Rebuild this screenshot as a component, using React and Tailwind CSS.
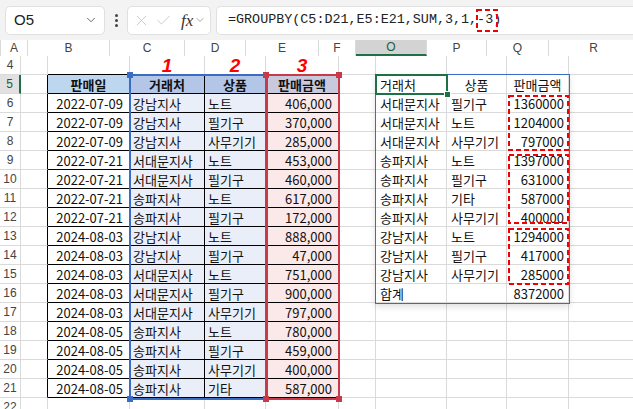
import React from "react";
import { X, Check, ChevronDown } from "lucide-react";

const COLS = [
  { k: "A", w: "w-[27px]" },
  { k: "B", w: "w-[82px]" },
  { k: "C", w: "w-[75px]" },
  { k: "D", w: "w-[61px]" },
  { k: "E", w: "w-[73px]" },
  { k: "F", w: "w-[37px]" },
  { k: "O", w: "w-[71px]" },
  { k: "P", w: "w-[60px]" },
  { k: "Q", w: "w-[62px]" },
  { k: "R", w: "w-[90px]" },
];

const SALES = [
  ["2022-07-09", "강남지사", "노트", "406,000"],
  ["2022-07-09", "강남지사", "필기구", "370,000"],
  ["2022-07-09", "강남지사", "사무기기", "285,000"],
  ["2022-07-21", "서대문지사", "노트", "453,000"],
  ["2022-07-21", "서대문지사", "필기구", "460,000"],
  ["2022-07-21", "송파지사", "노트", "617,000"],
  ["2022-07-21", "송파지사", "필기구", "172,000"],
  ["2024-08-03", "강남지사", "노트", "888,000"],
  ["2024-08-03", "강남지사", "필기구", "47,000"],
  ["2024-08-03", "서대문지사", "노트", "751,000"],
  ["2024-08-03", "서대문지사", "필기구", "900,000"],
  ["2024-08-03", "서대문지사", "사무기기", "797,000"],
  ["2024-08-05", "송파지사", "노트", "780,000"],
  ["2024-08-05", "송파지사", "필기구", "459,000"],
  ["2024-08-05", "송파지사", "사무기기", "400,000"],
  ["2024-08-05", "송파지사", "기타", "587,000"],
];

const RESULT = [
  ["서대문지사", "필기구", "1360000"],
  ["서대문지사", "노트", "1204000"],
  ["서대문지사", "사무기기", "797000"],
  ["송파지사", "노트", "1397000"],
  ["송파지사", "필기구", "631000"],
  ["송파지사", "기타", "587000"],
  ["송파지사", "사무기기", "400000"],
  ["강남지사", "노트", "1294000"],
  ["강남지사", "필기구", "417000"],
  ["강남지사", "사무기기", "285000"],
  ["합계", "", "8372000"],
];

const ROWS = [4, 5, 6, 7, 8, 9, 10, 11, 12, 13, 14, 15, 16, 17, 18, 19, 20, 21, 22];
const LEFT = ["B", "C", "D", "E"];
const MARKS = { C: "1", D: "2", E: "3" };

function cellInfo(r, k) {
  let text = "";
  let cls = "bg-white";
  const inLeft = LEFT.includes(k) && r >= 5 && r <= 21;
  if (r === 4 && MARKS[k]) {
    return { text: MARKS[k], cls: "justify-center text-[#ff0000] font-bold italic text-[19px] font-['Liberation_Sans',sans-serif]" };
  }
  if (inLeft) {
    const i = LEFT.indexOf(k);
    if (r === 5) {
      text = ["판매일", "거래처", "상품", "판매금액"][i];
      const bg = ["bg-[#bdd7ee]", "bg-[#b4c6e7]", "bg-[#b4c6e7]", "bg-[#c9c9dd]"][i];
      cls = `${bg} justify-center font-bold`;
    } else {
      text = SALES[r - 6][i];
      if (k === "B") cls = "bg-white justify-end pr-[6px]";
      if (k === "C" || k === "D") cls = "bg-[#e9eef8] pl-[3px]";
      if (k === "E") cls = "bg-[#fbe9ea] justify-end pr-[6px]";
    }
  }
  const ri = ["O", "P", "Q"].indexOf(k);
  if (ri >= 0 && r >= 5 && r <= 16) {
    if (r === 5) {
      text = ["거래처", "상품", "판매금액"][ri];
      cls = ri === 0 ? "bg-white pl-[4px]" : "bg-white justify-center";
    } else {
      text = RESULT[r - 6][ri];
      cls = ri === 2 ? "bg-white justify-end pr-[4px]" : "bg-white pl-[4px]";
    }
  }
  return { text, cls };
}

function borderCls(r, k) {
  const rBlack = (LEFT.includes(k) || k === "A") && r >= 5 && r <= 21;
  const bBlack = LEFT.includes(k) && r >= 4 && r <= 21;
  return `border-r border-b ${rBlack ? "border-r-black" : "border-r-[#dadada]"} ${bBlack ? "border-b-black" : "border-b-[#dadada]"}`;
}

function DashBox({ cls }) {
  return (
    <svg className={`absolute ${cls}`} preserveAspectRatio="none">
      <rect x="1" y="1" width="calc(100% - 2px)" height="calc(100% - 2px)" fill="none" stroke="#f00000" strokeWidth="2" strokeDasharray="5 3" />
    </svg>
  );
}

function Handle({ cls }) {
  return <div className={`absolute w-[6px] h-[6px] ${cls}`} />;
}

export default function App() {
  return (
    <div className="relative w-[633px] h-[409px] overflow-hidden bg-white font-['Noto_Sans_CJK_KR',sans-serif] text-[#111]">
      {/* toolbar */}
      <div className="h-[40px] bg-[#f3f3f3] flex items-center">
        <div className="ml-[5px] w-[100px] h-[29px] bg-white border border-[#e0e0e0] rounded-[5px] flex items-center justify-between pl-[8px] pr-[6px]">
          <span className="text-[15px] font-['Liberation_Sans',sans-serif] text-[#222]">O5</span>
          <ChevronDown size={14} strokeWidth={1.5} className="text-[#555]" />
        </div>
        <div className="w-[22px] flex flex-col items-center gap-[2px]">
          <span className="w-[3px] h-[3px] rounded-full bg-[#444]" />
          <span className="w-[3px] h-[3px] rounded-full bg-[#444]" />
          <span className="w-[3px] h-[3px] rounded-full bg-[#444]" />
        </div>
        <div className="w-[84px] h-[29px] bg-white border border-[#e0e0e0] rounded-[5px] flex items-center pl-[5px] pr-[2px]">
          <X size={17} strokeWidth={1.1} className="text-[#bdbdbd]" />
          <Check size={17} strokeWidth={1.1} className="text-[#bdbdbd] ml-[5px]" />
          <span className="ml-[9px] text-[17px] italic font-['Liberation_Serif',serif] text-[#333] leading-none">fx</span>
          <ChevronDown size={12} strokeWidth={1.3} className="text-[#777] ml-[1px]" />
        </div>
        <div className="ml-[5px] flex-1 h-[29px] bg-white border border-[#e0e0e0] border-r-0 rounded-l-[5px] flex items-center pl-[11px]">
          <span className="text-[13.4px] font-['Liberation_Mono',monospace] text-[#222] whitespace-pre">=GROUPBY(C5:D21,E5:E21,SUM,3,1,-3)</span>
        </div>
      </div>

      {/* column headers */}
      <div className="flex h-[16px] text-[12px] font-['Liberation_Sans',sans-serif] text-[#444]">
        <div className="w-[21px] border-r border-[#dadada] bg-white relative">
          <svg className="absolute right-[2px] bottom-[2px]" width="8" height="8">
            <polygon points="8,0 8,8 0,8" fill="#c8c8c8" />
          </svg>
        </div>
        {COLS.map(c => (
          <div
            key={c.k}
            className={`${c.w} shrink-0 flex items-center justify-center border-r border-[#dadada] ${c.k === "O" ? "bg-[#d3d3d3] border-b-2 border-b-[#1e7145] text-[#1e5c3a]" : "bg-white"}`}
          >
            {c.k}
          </div>
        ))}
      </div>

      {/* rows */}
      {ROWS.map(r => (
        <div key={r} className="flex h-[19px] text-[13px]">
          <div
            className={`w-[21px] shrink-0 flex items-center justify-center text-[12px] font-['Liberation_Sans',sans-serif] border-b border-[#dadada] ${r === 5 ? "bg-[#e1e1e1] border-r-2 border-r-[#1e7145] text-[#1e5c3a]" : "bg-white border-r text-[#444]"}`}
          >
            {r}
          </div>
          {COLS.map(c => {
            const { text, cls } = cellInfo(r, c.k);
            return (
              <div key={c.k} className={`${c.w} shrink-0 flex items-center whitespace-nowrap overflow-hidden leading-none ${borderCls(r, c.k)} ${cls}`}>
                {text}
              </div>
            );
          })}
        </div>
      ))}

      {/* selection overlays */}
      <div className="absolute left-[129px] top-[74px] w-[139px] h-[326px] border-2 border-[#3a6cc4]" />
      <div className="absolute left-[265px] top-[74px] w-[75px] h-[326px] border-2 border-[#c63a49]" />
      <Handle cls="left-[127px] top-[72px] bg-[#3a6cc4]" />
      <Handle cls="left-[127px] top-[396px] bg-[#3a6cc4]" />
      <Handle cls="left-[263px] top-[72px] bg-[#c63a49]" />
      <Handle cls="left-[336px] top-[72px] bg-[#c63a49]" />
      <Handle cls="left-[263px] top-[396px] bg-[#c63a49]" />
      <Handle cls="left-[336px] top-[396px] bg-[#c63a49]" />

      {/* spill range */}
      <div className="absolute left-[375px] top-[74px] w-[195px] h-[230px] border border-[#3a6cc4] shadow-[0_3px_6px_rgba(0,0,0,0.12)]" />
      <div className="absolute left-[375px] top-[74px] w-[73px] h-[21px] border-2 border-[#1e7145]" />
      <div className="absolute left-[444px] top-[91px] w-[7px] h-[7px] bg-[#1e7145] border border-white" />

      <DashBox cls="left-[508px] top-[95px] w-[61px] h-[56px]" />
      <DashBox cls="left-[508px] top-[154px] w-[61px] h-[70px]" />
      <DashBox cls="left-[508px] top-[228px] w-[61px] h-[57px]" />
      <DashBox cls="left-[476px] top-[9px] w-[22px] h-[23px]" />
    </div>
  );
}
